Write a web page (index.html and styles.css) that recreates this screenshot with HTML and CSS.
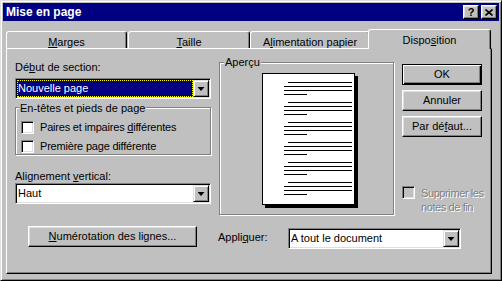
FILE: index.html
```html
<!DOCTYPE html>
<html lang="fr">
<head>
    <meta charset="UTF-8">
    <title>Mise en page</title>
    <link rel="stylesheet" href="styles.css">
</head>
<body>
    <div class="window">
        <div class="titlebar">
            <span class="title">Mise en page</span>
            <div class="title-buttons">
                <span class="tbtn help">?</span>
                <span class="tbtn close">
                    <svg width="8" height="7" viewBox="0 0 8 7"><path d="M0.5 0.5 L7.5 6.5 M7.5 0.5 L0.5 6.5" stroke="#000" stroke-width="1.6" fill="none"/></svg>
                </span>
            </div>
        </div>

        <div class="tabs">
            <div class="tab tab-marges"><u>M</u>arges</div>
            <div class="tab tab-taille"><u>T</u>aille</div>
            <div class="tab tab-alim">A<u>l</u>imentation papier</div>
            <div class="tab active">Dispo<u>s</u>ition</div>
        </div>

        <div class="panel">
            <div class="panel-top">
                <!-- colonne gauche -->
                <div class="col-left">
                    <div class="label first">Dé<u>b</u>ut de section:</div>
                    <div class="combo">
                        <div class="combo-value selected">Nouvelle page</div>
                        <span class="combo-btn"></span>
                    </div>

                    <div class="group">
                        <div class="group-title">En-têtes et pieds de page</div>
                        <div class="check"><span class="box"></span><span class="check-text">Paires et impaires <u>d</u>ifférentes</span></div>
                        <div class="check"><span class="box"></span><span class="check-text">Première pa<u>g</u>e différente</span></div>
                    </div>

                    <div class="label second">Alignement <u>v</u>ertical:</div>
                    <div class="combo">
                        <div class="combo-value">Haut</div>
                        <span class="combo-btn"></span>
                    </div>
                </div>

                <!-- aperçu -->
                <div class="preview">
                    <div class="group-title">Aperçu</div>
                    <div class="page">
                        <div class="para"><i class="ln first"></i><i class="ln"></i><i class="ln"></i><i class="ln last"></i></div>
                        <div class="para"><i class="ln first"></i><i class="ln"></i><i class="ln"></i><i class="ln last"></i></div>
                        <div class="para"><i class="ln first"></i><i class="ln"></i><i class="ln"></i><i class="ln last"></i></div>
                        <div class="para"><i class="ln first"></i><i class="ln"></i><i class="ln"></i><i class="ln last"></i></div>
                        <div class="para"><i class="ln first"></i><i class="ln"></i><i class="ln"></i><i class="ln last"></i></div>
                        <div class="para"><i class="ln first"></i><i class="ln"></i><i class="ln"></i><i class="ln last"></i></div>
                    </div>
                </div>

                <!-- boutons -->
                <div class="col-right">
                    <div class="btn default">OK</div>
                    <div class="btn">Annuler</div>
                    <div class="btn">Par dé<u>f</u>aut...</div>
                    <div class="check disabled"><span class="box"></span><span class="check-text">Supprimer les<br>notes de fin</span></div>
                </div>
            </div>

            <div class="panel-bottom">
                <div class="btn wide"><u>N</u>umérotation des lignes...</div>
                <div class="label apply">Appli<u>q</u>uer:</div>
                <div class="combo apply-combo">
                    <div class="combo-value">A tout le document</div>
                    <span class="combo-btn"></span>
                </div>
            </div>
        </div>
    </div>
</body>
</html>
```

FILE: styles.css
```css
/* fenêtre type Windows 95 */
* {
    box-sizing: border-box;
}

body {
    margin: 0;
    background-color: #C0C0C0;
    font-family: "Liberation Sans", Arial, sans-serif;
    font-size: 11px;
    line-height: 13px;
    color: #000;
}

u {
    text-decoration: underline;
    text-underline-offset: 1px;
}

.window {
    width: 502px;
    height: 281px;
    padding: 2px;
    background-color: #C0C0C0;
    border: 1px solid;
    border-color: #DFDFDF #000 #000 #DFDFDF;
    box-shadow: inset 1px 1px #fff, inset -1px -1px #808080;
}

.titlebar {
    display: flex;
    align-items: center;
    justify-content: space-between;
    height: 18px;
    padding: 0 2px 0 3px;
    background-color: #000080;
}

.title {
    color: #fff;
    font-weight: bold;
    font-size: 12px;
    line-height: 15px;
    padding-top: 1px;
}

.title-buttons {
    display: flex;
    gap: 2px;
}

.tbtn {
    display: flex;
    align-items: center;
    justify-content: center;
    width: 16px;
    height: 14px;
    background-color: #C0C0C0;
    border: 1px solid;
    border-color: #fff #000 #000 #fff;
    box-shadow: inset -1px -1px #808080, inset 1px 1px #DFDFDF;
}

.tbtn.help {
    font-weight: bold;
    font-size: 11px;
    line-height: 12px;
}

/* onglets */
.tabs {
    display: flex;
    align-items: flex-end;
    height: 19px;
    margin-top: 8px;
    padding-left: 3px;
}

.tab {
    height: 17px;
    padding-top: 4px;
    text-align: center;
    background-color: #C0C0C0;
    border: 1px solid;
    border-bottom: none;
    border-color: #fff #000 #000 #fff;
    border-radius: 3px 3px 0 0;
    box-shadow: inset -1px 0 #808080;
}

.tab-marges {
    width: 121px;
}

.tab-taille {
    width: 122px;
    margin-left: 1px;
}

.tab-alim {
    width: 120px;
}

.tab.active {
    position: relative;
    z-index: 1;
    width: 123px;
    height: 20px;
    margin-left: -2px;
    margin-bottom: -1px;
}

.panel {
    width: 486px;
    height: 226px;
    margin-left: 3px;
    padding: 0 0 0 8px;
    border: 1px solid;
    border-color: #fff #000 #000 #fff;
    box-shadow: inset -1px -1px #808080;
}

.panel-top {
    display: flex;
    align-items: flex-start;
}

.col-left {
    width: 196px;
}

.label.first {
    margin-top: 12px;
}

.label.second {
    margin-top: 15px;
}

/* liste déroulante */
.combo {
    display: flex;
    height: 21px;
    padding: 1px;
    background-color: #fff;
    border: 1px solid;
    border-color: #808080 #fff #fff #808080;
    box-shadow: inset 1px 1px #000, inset -1px -1px #DFDFDF;
}

.label.first + .combo {
    margin-top: 4px;
}

.combo-value {
    flex: 1;
    padding-left: 1px;
    line-height: 17px;
    white-space: nowrap;
}

.combo-value.selected {
    background-color: #000080;
    color: #fff;
    outline: 1px dotted #FFFF00;
    outline-offset: -1px;
}

.combo-btn {
    display: flex;
    align-items: center;
    justify-content: center;
    width: 16px;
    height: 17px;
    background-color: #C0C0C0;
    border: 1px solid;
    border-color: #DFDFDF #000 #000 #DFDFDF;
    box-shadow: inset 1px 1px #fff, inset -1px -1px #808080;
}

.combo-btn::after {
    content: "";
    width: 7px;
    height: 4px;
    margin-top: 1px;
    background-color: #000;
    clip-path: polygon(0 0, 100% 0, 50% 100%);
}

/* cadres */
.group {
    height: 48px;
    margin-top: 8px;
    border: 1px solid #808080;
    box-shadow: inset 1px 1px #fff, 1px 1px #fff;
}

.group-title {
    width: max-content;
    margin: -6px 0 0 3px;
    padding: 0 1px;
    background-color: #C0C0C0;
    white-space: nowrap;
}

.check {
    display: flex;
    align-items: flex-start;
    margin: 6px 0 0 5px;
    white-space: nowrap;
}

.check-text {
    letter-spacing: -0.2px;
}

.box {
    flex: none;
    width: 13px;
    height: 13px;
    margin-right: 6px;
    background-color: #fff;
    border: 1px solid;
    border-color: #808080 #fff #fff #808080;
    box-shadow: inset 1px 1px #000, inset -1px -1px #DFDFDF;
}

.check.disabled {
    margin: 44px 0 0 0;
    line-height: 14px;
    color: #808080;
    text-shadow: 1px 1px 0 #fff;
}

.check.disabled .check-text {
    letter-spacing: -0.4px;
}

.check.disabled .box {
    background-color: #C0C0C0;
}

/* aperçu */
.preview {
    width: 175px;
    height: 153px;
    margin: 13px 0 0 8px;
    border: 1px solid #808080;
    box-shadow: inset 1px 1px #fff, 1px 1px #fff;
}

.preview .group-title {
    margin: -7px 0 0 4px;
}

.page {
    width: 93px;
    height: 132px;
    margin: 4px 0 0 42px;
    padding: 8px 0 0 21px;
    background-color: #fff;
    border: 1px solid #000;
    box-shadow: 3px 3px 0 #000;
}

.para {
    display: flex;
    flex-direction: column;
    gap: 3px;
    margin-bottom: 7px;
}

.ln {
    display: block;
    width: 68px;
    height: 1px;
    background-color: #000;
}

.ln.first {
    width: 64px;
    margin-left: 4px;
}

.ln.last {
    width: 23px;
}

/* boutons */
.col-right {
    display: flex;
    flex-direction: column;
    width: 80px;
    margin: 15px 0 0 8px;
}

.btn {
    height: 21px;
    margin-bottom: 5px;
    text-align: center;
    line-height: 19px;
    background-color: #C0C0C0;
    border: 1px solid;
    border-color: #fff #000 #000 #fff;
    box-shadow: inset -1px -1px #808080, inset 1px 1px #DFDFDF;
    white-space: nowrap;
}

.btn.default {
    border-color: #000;
    box-shadow: inset 1px 1px #fff, inset -1px -1px #000, inset -2px -2px #808080;
}

.panel-bottom {
    display: flex;
    align-items: flex-start;
    margin-top: 11px;
    padding-left: 13px;
}

.btn.wide {
    width: 169px;
    margin: 0;
}

.label.apply {
    width: 70px;
    margin: 5px 0 0 21px;
}

.apply-combo {
    width: 173px;
    margin-top: 2px;
}
```
